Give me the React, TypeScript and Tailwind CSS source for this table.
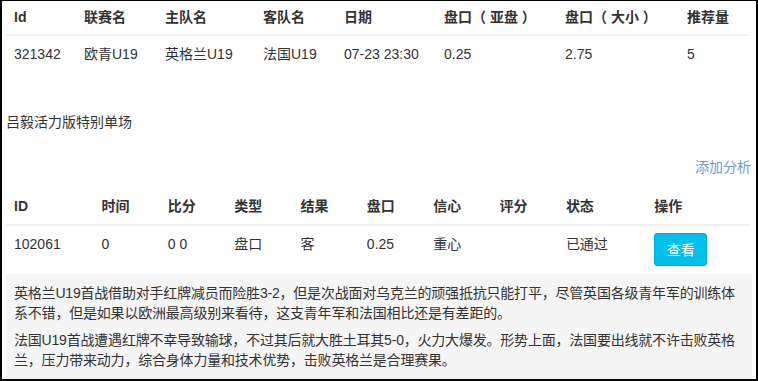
const font = { fontFamily: '"Liberation Sans", "Noto Sans CJK SC", sans-serif' };

const matchCols = [
  { label: 'Id', w: 70 },
  { label: '联赛名', w: 81 },
  { label: '主队名', w: 98 },
  { label: '客队名', w: 81 },
  { label: '日期', w: 100 },
  { label: '盘口（ 亚盘 ）', w: 121 },
  { label: '盘口（ 大小 ）', w: 122 },
  { label: '推荐量', w: 71 },
];
const matchRow = ['321342', '欧青U19', '英格兰U19', '法国U19', '07-23 23:30', '0.25', '2.75', '5'];

const tipCols = [
  { label: 'ID', w: 87 },
  { label: '时间', w: 66 },
  { label: '比分', w: 66 },
  { label: '类型', w: 66 },
  { label: '结果', w: 66 },
  { label: '盘口', w: 66 },
  { label: '信心', w: 66 },
  { label: '评分', w: 66 },
  { label: '状态', w: 88 },
  { label: '操作', w: 103 },
];
const tipRow = ['102061', '0', '0 0', '盘口', '客', '0.25', '重心', '', '已通过'];

export default function App() {
  return (
    <div
      className="w-[758px] h-[381px] overflow-hidden bg-white border-black border-t border-l-2 border-r-2 border-b-2 text-[14px] leading-[20px] text-[#333]"
      style={font}
    >
      <div className="pl-[4px] pr-[4px]">
        <table className="w-[744px] table-fixed border-collapse">
          <colgroup>
            {matchCols.map((c) => (
              <col key={c.label} style={{ width: c.w }} />
            ))}
          </colgroup>
          <thead>
            <tr className="border-b-2 border-[#f2f2f2]">
              {matchCols.map((c) => (
                <th key={c.label} className="text-left font-bold px-2 pt-[6px] pb-[7px] whitespace-nowrap">
                  {c.label}
                </th>
              ))}
            </tr>
          </thead>
          <tbody>
            <tr>
              {matchRow.map((v, i) => (
                <td key={i} className="px-2 py-2 whitespace-nowrap">{v}</td>
              ))}
            </tr>
          </tbody>
        </table>

        <div className="mt-[40px]">吕毅活力版特别单场</div>

        <div className="mt-[25px] text-right pr-[1px] text-[#6d9bd1]">添加分析</div>

        <table className="mt-[9px] w-[744px] table-fixed border-collapse">
          <colgroup>
            {tipCols.map((c) => (
              <col key={c.label} style={{ width: c.w }} />
            ))}
          </colgroup>
          <thead>
            <tr className="border-b-2 border-[#f2f2f2]">
              {tipCols.map((c) => (
                <th key={c.label} className="text-left font-bold px-2 pt-[10px] pb-[8px] whitespace-nowrap">
                  {c.label}
                </th>
              ))}
            </tr>
          </thead>
          <tbody>
            <tr>
              {tipRow.map((v, i) => (
                <td key={i} className="align-top px-2 pt-2 pb-[9px] whitespace-nowrap">{v}</td>
              ))}
              <td className="align-top px-2 pt-[7px] pb-[8px]">
                <button className="w-[53px] h-[33px] rounded-[3px] bg-[#00c0ef] border border-[#00acd6] text-white text-[14px]">
                  查看
                </button>
              </td>
            </tr>
          </tbody>
        </table>

        <div className="bg-[#f5f5f5] px-2 pt-[9px] pb-[10px] tracking-[-0.2px]">
          <p>
            英格兰U19首战借助对手红牌减员而险胜3-2，但是次战面对乌克兰的顽强抵抗只能打平，尽管英国各级青年军的训练体系不错，但是如果以欧洲最高级别来看待，这支青年军和法国相比还是有差距的。
          </p>
          <p className="mt-[7px]">
            法国U19首战遭遇红牌不幸导致输球，不过其后就大胜土耳其5-0，火力大爆发。形势上面，法国要出线就不许击败英格兰，压力带来动力，综合身体力量和技术优势，击败英格兰是合理赛果。
          </p>
        </div>
      </div>
    </div>
  );
}
